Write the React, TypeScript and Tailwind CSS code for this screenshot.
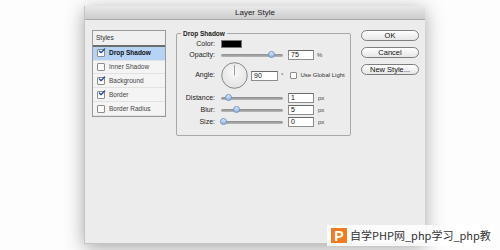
import { Check } from 'lucide-react'

const styles = [
  { name: 'Drop Shadow', checked: true, active: true },
  { name: 'Inner Shadow', checked: false, active: false },
  { name: 'Background', checked: true, active: false },
  { name: 'Border', checked: true, active: false },
  { name: 'Border Radius', checked: false, active: false },
]

const Slider = ({ value }: { value: number }) => (
  <div className="relative w-[62px] h-[8px] flex items-center">
    <div className="w-full h-[3px] rounded-full bg-gradient-to-b from-[#8c8c8c] to-[#b8b8b8]" />
    <div
      className="absolute top-[0px] w-[7px] h-[7px] rounded-full border border-[#6f93c0] bg-gradient-to-b from-[#d8e8fa] to-[#8db7e6]"
      style={{ left: `${value}%` }}
    />
  </div>
)

const Field = ({ value }: { value: string }) => (
  <div className="w-[26px] h-[10px] bg-white border border-[#8e8e8e] border-t-[#6a6a6a] pl-[2px] text-[7px] leading-[8px] text-[#111]">
    {value}
  </div>
)

const Row = ({ label, children, className }: { label: string; children: React.ReactNode; className?: string }) => (
  <div className={`flex items-center ${className ?? ''}`}>
    <div className="w-[38px] text-right text-[7px] text-[#222]">{label}:</div>
    <div className="ml-[6px] flex items-center">{children}</div>
  </div>
)

const Box = ({ checked }: { checked: boolean }) => (
  <div className="relative w-[8px] h-[8px] bg-white border border-[#8d8d8d] rounded-[1px] shrink-0">
    {checked && (
      <Check className="absolute -top-[3px] left-[0px] w-[8px] h-[8px] text-[#1f4f9c]" strokeWidth={4} />
    )}
  </div>
)

export default function App() {
  return (
    <div
      className="relative w-[500px] h-[250px] overflow-hidden bg-[#fdfdfd] pl-[84px] pt-[6px]"
      style={{ fontFamily: '"Liberation Sans", Arial, sans-serif' }}
    >
      <div className="w-[341px] h-[238px] flex flex-col bg-[#ececec] border-l border-b border-[#c4c4c4] shadow-[0_4px_18px_rgba(0,0,0,0.35)]">
        {/* Title bar */}
        <div className="h-[14px] flex items-center justify-center bg-gradient-to-b from-[#e9e9e9] to-[#cdcdcd] border-b border-[#a9a9a9] text-[8px] text-[#222]">
          Layer Style
        </div>

        <div className="flex pl-[7px] pt-[10px]">
          {/* Styles list */}
          <div className="w-[74px] h-[87px] border border-[#9a9a9a] bg-[#f4f4f4] flex flex-col">
            <div className="h-[14px] flex items-center pl-[3px] text-[6.5px] text-[#333] bg-[#f0f0f0]">Styles</div>
            <div className="h-[2px] border-t border-b border-[#6d6d6d] bg-[#9a9a9a]" />
            {styles.map((s) => (
              <div
                key={s.name}
                className={`h-[14px] flex items-center gap-[4px] pl-[4px] border-b border-[#e2e2e2] text-[6.5px] ${
                  s.active ? 'bg-[#b6d3f6] font-bold text-[#111]' : 'text-[#444]'
                }`}
              >
                <Box checked={s.checked} />
                {s.name}
              </div>
            ))}
          </div>

          {/* Drop Shadow group */}
          <div className="relative ml-[10px] mt-[3px] w-[175px] h-[103px] border border-[#a8a8a8] rounded-[2px] flex flex-col pt-[5px]">
            <div className="absolute -top-[5px] left-[4px] px-[2px] bg-[#ececec] text-[6.5px] font-bold text-[#222]">
              Drop Shadow
            </div>
            <Row label="Color" className="h-[10px]">
              <div className="w-[21px] h-[8px] bg-black border border-[#777]" />
            </Row>
            <Row label="Opacity" className="h-[10px] mt-[1px]">
              <Slider value={75} />
              <div className="ml-[5px]"><Field value="75" /></div>
              <span className="ml-[3px] text-[6px] text-[#444]">%</span>
            </Row>
            <Row label="Angle" className="h-[27px] mt-[2px]">
              <svg width="27" height="27" viewBox="0 0 27 27">
                <defs>
                  <radialGradient id="dial" cx="50%" cy="40%" r="60%">
                    <stop offset="0%" stopColor="#fafafa" />
                    <stop offset="100%" stopColor="#e2e2e2" />
                  </radialGradient>
                </defs>
                <circle cx="13.5" cy="13.5" r="12.8" fill="url(#dial)" stroke="#7c7c7c" strokeWidth="0.9" />
                <line x1="13.5" y1="13.5" x2="13.5" y2="3" stroke="#888" strokeWidth="0.8" />
              </svg>
              <div className="ml-[3px] w-[27px] h-[10px] bg-white border border-[#8e8e8e] border-t-[#6a6a6a] pl-[2px] text-[7px] leading-[8px] text-[#111]">
                90
              </div>
              <span className="ml-[3px] text-[6px] text-[#444]">°</span>
              <div className="ml-[7px] w-[7px] h-[7px] bg-white border border-[#8d8d8d] rounded-[1px]" />
              <span className="ml-[3px] text-[6px] text-[#333] whitespace-nowrap">Use Global Light</span>
            </Row>
            <Row label="Distance" className="h-[10px] mt-[4px]">
              <Slider value={6} />
              <div className="ml-[5px]"><Field value="1" /></div>
              <span className="ml-[4px] text-[6px] text-[#444]">px</span>
            </Row>
            <Row label="Blur" className="h-[10px] mt-[2px]">
              <Slider value={19} />
              <div className="ml-[5px]"><Field value="5" /></div>
              <span className="ml-[4px] text-[6px] text-[#444]">px</span>
            </Row>
            <Row label="Size" className="h-[10px] mt-[2px]">
              <Slider value={-2} />
              <div className="ml-[5px]"><Field value="0" /></div>
              <span className="ml-[4px] text-[6px] text-[#444]">px</span>
            </Row>
          </div>

          {/* Buttons */}
          <div className="ml-[10px] w-[58px] flex flex-col gap-[6px]">
            {['OK', 'Cancel', 'New Style...'].map((b) => (
              <button
                key={b}
                className="h-[11px] rounded-full border border-[#7e7e7e] bg-gradient-to-b from-[#ffffff] to-[#e6e6e6] text-[7.5px] leading-none text-[#111]"
              >
                {b}
              </button>
            ))}
          </div>
        </div>
      </div>

      {/* Watermark */}
      <div className="absolute left-[327px] top-[225px] w-[168px] h-[21px] bg-white/85 flex items-center pl-[4px]">
        <div className="w-[16px] h-[15px] bg-[#f07c22] flex items-center justify-center text-white font-bold text-[14px] leading-none shrink-0">
          P
        </div>
        <span
          className="ml-[3px] text-[11px] text-[#333] whitespace-nowrap"
          style={{ fontFamily: '"Noto Sans CJK SC", sans-serif' }}
        >
          自学PHP网_php学习_php教
        </span>
      </div>
    </div>
  )
}
